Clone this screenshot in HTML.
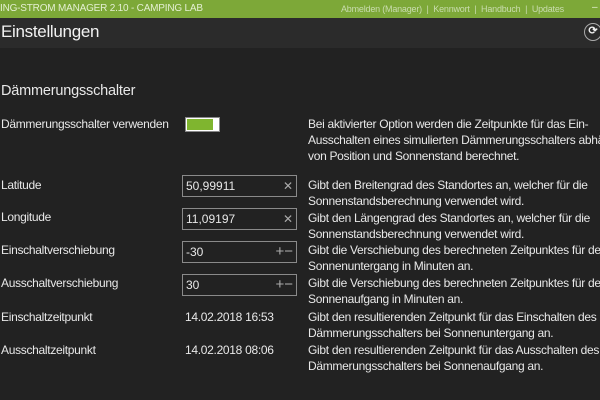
<!DOCTYPE html>
<html><head><meta charset="utf-8"><style>
*{margin:0;padding:0;box-sizing:border-box}
html,body{width:600px;height:400px;overflow:hidden}
body{background:#222;font-family:"Liberation Sans",sans-serif;color:#e8e8e8;position:relative}
.top{position:absolute;left:0;top:0;width:600px;height:18px;background:#7da838;color:#e4efd2;font-size:10px;line-height:18px;white-space:nowrap;overflow:hidden}
.hdr{position:absolute;left:0;top:18px;width:600px;height:30px;background:#2b2b2b}
.a{position:absolute;white-space:nowrap;font-size:12px;line-height:16px;letter-spacing:-0.3px}
.d{position:absolute;left:308px;width:292px;overflow:hidden;white-space:nowrap;font-size:12px;line-height:16px;letter-spacing:-0.3px}
.in{position:absolute;left:182px;width:115px;height:22px;border:1px solid #8a8a8a;font-size:12px;line-height:20px;padding-left:3px}
.in span{position:absolute;right:3px;top:0;color:#aaa;font-size:12px}
</style></head><body>
<div class="top"><span style="position:absolute;left:0;letter-spacing:-0.2px">ING-STROM MANAGER 2.10 - CAMPING LAB</span>
<span style="position:absolute;left:341px;font-size:9px;color:#c9dcae;letter-spacing:-0.2px">Abmelden (Manager) &nbsp;|&nbsp; Kennwort &nbsp;|&nbsp; Handbuch &nbsp;|&nbsp; Updates</span>
<span style="position:absolute;left:592px;top:-1px">–</span></div>
<div class="hdr"><div style="position:absolute;left:1px;top:4px;font-size:17px;color:#f2f2f2;letter-spacing:-0.3px">Einstellungen</div>
<div style="position:absolute;left:584px;top:5px;width:18px;height:18px;border:1.5px solid #aaa;border-radius:50%;font-size:11px;line-height:15px;text-align:center;color:#eee;font-weight:bold">⟳</div></div>
<div class="a" style="left:1px;top:82px;font-size:14.5px;line-height:18px;letter-spacing:-0.2px">Dämmerungsschalter</div>
<div class="a" style="left:1px;top:116px">Dämmerungsschalter verwenden</div>
<div style="position:absolute;left:185px;top:117px;width:35px;height:15px;border:1px solid #888;background:#fff"><div style="position:absolute;left:1px;top:1px;width:26px;height:11px;background:#7fb52f"></div></div>
<div class="d" style="top:116px">Bei aktivierter Option werden die Zeitpunkte für das Ein-<br>Ausschalten eines simulierten Dämmerungsschalters abhängig<br>von Position und Sonnenstand berechnet.</div>
<div class="a" style="left:1px;top:177px">Latitude</div>
<div class="in" style="top:175px">50,99911<span>✕</span></div>
<div class="d" style="top:177px">Gibt den Breitengrad des Standortes an, welcher für die<br>Sonnenstandsberechnung verwendet wird.</div>
<div class="a" style="left:1px;top:209px">Longitude</div>
<div class="in" style="top:208px">11,09197<span>✕</span></div>
<div class="d" style="top:210px">Gibt den Längengrad des Standortes an, welcher für die<br>Sonnenstandsberechnung verwendet wird.</div>
<div class="a" style="left:1px;top:242px">Einschaltverschiebung</div>
<div class="in" style="top:241px">-30<span style="font-size:15px">+−</span></div>
<div class="d" style="top:242px">Gibt die Verschiebung des berechneten Zeitpunktes für den<br>Sonnenuntergang in Minuten an.</div>
<div class="a" style="left:1px;top:275px">Ausschaltverschiebung</div>
<div class="in" style="top:274px">30<span style="font-size:15px">+−</span></div>
<div class="d" style="top:275px">Gibt die Verschiebung des berechneten Zeitpunktes für den<br>Sonnenaufgang in Minuten an.</div>
<div class="a" style="left:1px;top:309px">Einschaltzeitpunkt</div>
<div class="a" style="left:185px;top:309px">14.02.2018 16:53</div>
<div class="d" style="top:309px">Gibt den resultierenden Zeitpunkt für das Einschalten des<br>Dämmerungsschalters bei Sonnenuntergang an.</div>
<div class="a" style="left:1px;top:342px">Ausschaltzeitpunkt</div>
<div class="a" style="left:185px;top:342px">14.02.2018 08:06</div>
<div class="d" style="top:342px">Gibt den resultierenden Zeitpunkt für das Ausschalten des<br>Dämmerungsschalters bei Sonnenaufgang an.</div>
</body></html>
